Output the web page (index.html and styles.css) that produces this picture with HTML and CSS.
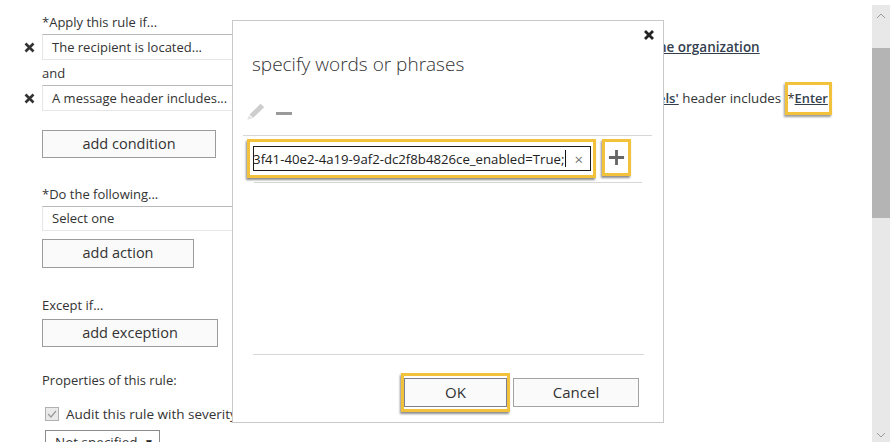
FILE: index.html
```html
<!DOCTYPE html>
<html>
<head>
<meta charset="utf-8">
<link rel="stylesheet" href="styles.css">
</head>
<body>
<div class="page">
  <div class="content">
    <div class="label">*Apply this rule if...</div>
    <div class="cond-row first">
      <svg class="xicon" viewBox="0 0 11 11" width="11" height="11"><path d="M1.5 1.5 L9.5 9.5 M9.5 1.5 L1.5 9.5" stroke="#333" stroke-width="2.6"/></svg>
      <div class="dd">The recipient is located...</div>
      <div class="desc"><span class="lnk">Outside the organization</span></div>
    </div>
    <div class="label and">and</div>
    <div class="cond-row">
      <svg class="xicon" viewBox="0 0 11 11" width="11" height="11"><path d="M1.5 1.5 L9.5 9.5 M9.5 1.5 L1.5 9.5" stroke="#333" stroke-width="2.6"/></svg>
      <div class="dd">A message header includes...</div>
      <div class="desc second"><span class="lnk">'msip_labels'</span> header includes <span class="hl-text">*<span class="lnk">Enter</span></span></div>
    </div>
    <button class="btn w-cond">add condition</button>
    <div class="label do">*Do the following...</div>
    <div class="dd sel">Select one</div>
    <button class="btn w-act">add action</button>
    <div class="label exc">Except if...</div>
    <button class="btn w-exc">add exception</button>
    <div class="label props">Properties of this rule:</div>
    <div class="audit">
      <span class="chk"><svg viewBox="0 0 14 14" width="14" height="14"><path d="M3 7 L6 10 L11 4" stroke="#9a9a9a" stroke-width="1.2" fill="none"/></svg></span>
      <span>Audit this rule with severity level:</span>
    </div>
    <div class="sev">Not specified <span class="tri">&#9660;</span></div>

    <div class="dialog">
      <div class="dlg-top">
        <svg class="close" viewBox="0 0 12 12" width="12" height="12"><path d="M2 2 L10 10 M10 2 L2 10" stroke="#222" stroke-width="2.8"/></svg>
      </div>
      <div class="dlg-title">specify words or phrases</div>
      <div class="toolbar">
        <svg class="pencil" viewBox="0 0 19 17" width="19" height="17"><path d="M14.5 0.8 L18.2 4.3 L7 15 L3.6 11.6 Z" fill="#cdcdcd"/><path d="M3 12.3 L6.3 15.6 L1.3 16.8 Z" fill="#e2e2e2"/></svg>
        <span class="minus"></span>
      </div>
      <div class="sep1"></div>
      <div class="input-row">
        <div class="hl hl-input">
          <div class="inp"><span class="inp-text">MSIP_Label_a8a73f41-40e2-4a19-9af2-dc2f8b4826ce_enabled=True;</span><span class="caret"></span><span class="clr">&#215;</span></div>
        </div>
        <div class="hl hl-plus">
          <svg viewBox="0 0 18 18" width="17" height="17"><path d="M9 1 V17 M1 9 H17" stroke="#666" stroke-width="3"/></svg>
        </div>
      </div>
      <div class="line2"></div>
      <div class="spacer"></div>
      <div class="sep2"></div>
      <div class="footer">
        <div class="hl hl-ok"><button class="dbtn ok">OK</button></div>
        <button class="dbtn cancel">Cancel</button>
      </div>
    </div>
  </div>
  <div class="scrollbar">
    <div class="sb-up"><svg viewBox="0 0 10 6" width="10" height="6"><path d="M1 5 L5 1 L9 5" stroke="#9a9a9a" stroke-width="1" fill="none"/></svg></div>
    <div class="sb-thumb"></div>
    <div class="sb-track"></div>
    <div class="sb-down"><svg viewBox="0 0 10 6" width="10" height="6"><path d="M1 1 L5 5 L9 1" stroke="#9a9a9a" stroke-width="1" fill="none"/></svg></div>
  </div>
</div>
</body>
</html>
```

FILE: styles.css
```css
html, body {
  margin: 0;
  padding: 0;
  background: #ffffff;
}
body {
  font-family: "Open Sans", "Noto Sans", sans-serif;
  font-size: 13px;
  color: #333333;
}
.page {
  display: flex;
  width: 894px;
  height: 442px;
  overflow: hidden;
}
.content {
  position: relative;
  width: 872px;
  height: 442px;
  padding: 13px 0 0 42px;
  box-sizing: border-box;
  overflow: hidden;
}
.label {
  line-height: 18px;
  height: 18px;
  white-space: nowrap;
}
.cond-row {
  display: grid;
  grid-template-columns: 536px auto;
  align-items: center;
  margin-top: 3px;
  position: relative;
}
.xicon {
  position: absolute;
  left: -18px;
  top: 8px;
}
.dd {
  height: 26px;
  box-sizing: border-box;
  width: 300px;
  border-top: 1px solid #b9b9b9;
  border-left: 1px solid #e6e6e6;
  border-bottom: 1px solid #e6e6e6;
  padding-left: 9px;
  line-height: 24px;
  white-space: nowrap;
  color: #333;
}
.desc {
  white-space: nowrap;
  padding-left: 20px;
  font-size: 13.5px;
}
.desc.second {
  padding-left: 20px;
  font-size: 13.3px;
}
.lnk {
  font-weight: 600;
  text-decoration: underline;
  color: #333f4f;
}
.hl-text {
  border: 3px solid #f3c23c;
  padding: 4px 1px 5px 0;
  font-size: 12.8px;
  box-shadow: -1px 2px 2px rgba(0,0,0,0.4);
}
.label.and { margin-top: 4px; }
.btn {
  display: block;
  font-family: inherit;
  font-size: 14.5px;
  color: #333;
  background: #fafafa;
  border: 1px solid #9c9c9c;
  padding: 0 0 2px 0;
  height: 28px;
  box-sizing: border-box;
}
.w-cond { width: 174px; margin-top: 19px; }
.w-act { width: 152px; height: 29px; margin-top: 8px; }
.w-exc { width: 176px; margin-top: 5px; }
.label.do { margin-top: 27px; }
.dd.sel { margin-top: 3px; height: 25px; line-height: 23px; }
.label.exc { margin-top: 28px; }
.label.props { margin-top: 24px; }
.audit {
  display: flex;
  align-items: center;
  margin-top: 16px;
  margin-left: 3px;
  height: 18px;
  white-space: nowrap;
  font-size: 13.5px;
}
.chk {
  width: 14px;
  height: 14px;
  box-sizing: border-box;
  border: 1px solid #b0b0b0;
  background: #eaeaea;
  margin-right: 7px;
  display: flex;
}
.chk svg { margin: -1px; }
.sev {
  margin-top: 7px;
  margin-left: 3px;
  width: 115px;
  height: 24px;
  box-sizing: border-box;
  border-top: 1px solid #8c8c8c;
  border-left: 1px solid #8c8c8c;
  border-right: 1px solid #8c8c8c;
  padding-left: 9px;
  line-height: 22px;
  font-size: 13.5px;
  display: flex;
  justify-content: space-between;
}
.tri { font-size: 10px; padding-right: 5px; color: #222; }

/* dialog */
.dialog {
  position: absolute;
  left: 232px;
  top: 20px;
  width: 432px;
  height: 403px;
  box-sizing: border-box;
  border: 1px solid #c9c9c9;
  background: #ffffff;
  display: flex;
  flex-direction: column;
}
.dlg-top {
  height: 30px;
  display: flex;
  justify-content: flex-end;
  align-items: flex-start;
  padding: 8px 8px 0 0;
  box-sizing: border-box;
}
.dlg-title {
  margin-left: 19px;
  font-size: 19px;
  font-weight: 300;
  line-height: 26px;
  color: #333;
  white-space: nowrap;
}
.toolbar {
  margin-top: 26px;
  margin-left: 13px;
  height: 17px;
  display: flex;
  align-items: center;
}
.minus {
  display: block;
  width: 16px;
  height: 3px;
  background: #9a9a9a;
  margin-left: 11px;
  margin-top: 3px;
}
.sep1 {
  margin: 15px 11px 0 10px;
  border-top: 1px solid #d7d7d7;
}
.input-row {
  display: flex;
  margin-top: 3px;
  margin-left: 14px;
  gap: 6px;
}
.hl {
  border: 3px solid #f3c23c;
  box-shadow: -1px 2px 2px rgba(0,0,0,0.45);
  background: #fff;
}
.hl-input {
  padding: 4px 2px 4px 3px;
}
.inp {
  width: 338px;
  height: 25px;
  box-sizing: border-box;
  border: 1px solid #1c1c1c;
  display: flex;
  justify-content: flex-end;
  align-items: center;
  overflow: hidden;
  white-space: nowrap;
  font-size: 13.2px;
  color: #222;
}
.inp-text { flex: none; }
.caret {
  flex: none;
  width: 1px;
  height: 17px;
  background: #111;
  margin-left: 1px;
}
.clr {
  flex: none;
  color: #777;
  font-size: 15px;
  margin: 0 7px 0 8px;
  line-height: 20px;
}
.hl-plus {
  width: 29px;
  height: 37px;
  box-sizing: border-box;
  display: flex;
  align-items: center;
  justify-content: center;
}
.line2 {
  margin: 4px 21px 0 21px;
  border-top: 1px solid #d7d7d7;
}
.spacer { flex: 1; }
.sep2 {
  margin: 0 19px 0 20px;
  border-top: 1px solid #d7d7d7;
}
.footer {
  display: flex;
  justify-content: flex-end;
  align-items: center;
  gap: 3px;
  padding: 18px 24px 10px 0;
}
.hl-ok { padding: 2px 0; }
.dbtn {
  font-family: inherit;
  font-size: 15px;
  color: #333;
  background: #fafafa;
  border: 1px solid #a3a3a3;
  padding: 0 0 2px 0;
  height: 29px;
  box-sizing: border-box;
  display: block;
}
.ok { width: 103px; border-color: #7c7f8e; }
.cancel { width: 126px; }

/* scrollbar */
.scrollbar {
  width: 18px;
  margin-top: 5px;
  background: #e8e8e8;
  display: flex;
  flex-direction: column;
}
.sb-up {
  height: 43px;
  display: flex;
  justify-content: center;
  padding-top: 8px;
  box-sizing: border-box;
}
.sb-thumb {
  height: 170px;
  background: #b4b4b4;
}
.sb-track { flex: 1; }
.sb-down {
  height: 10px;
  display: flex;
  justify-content: center;
}
```
